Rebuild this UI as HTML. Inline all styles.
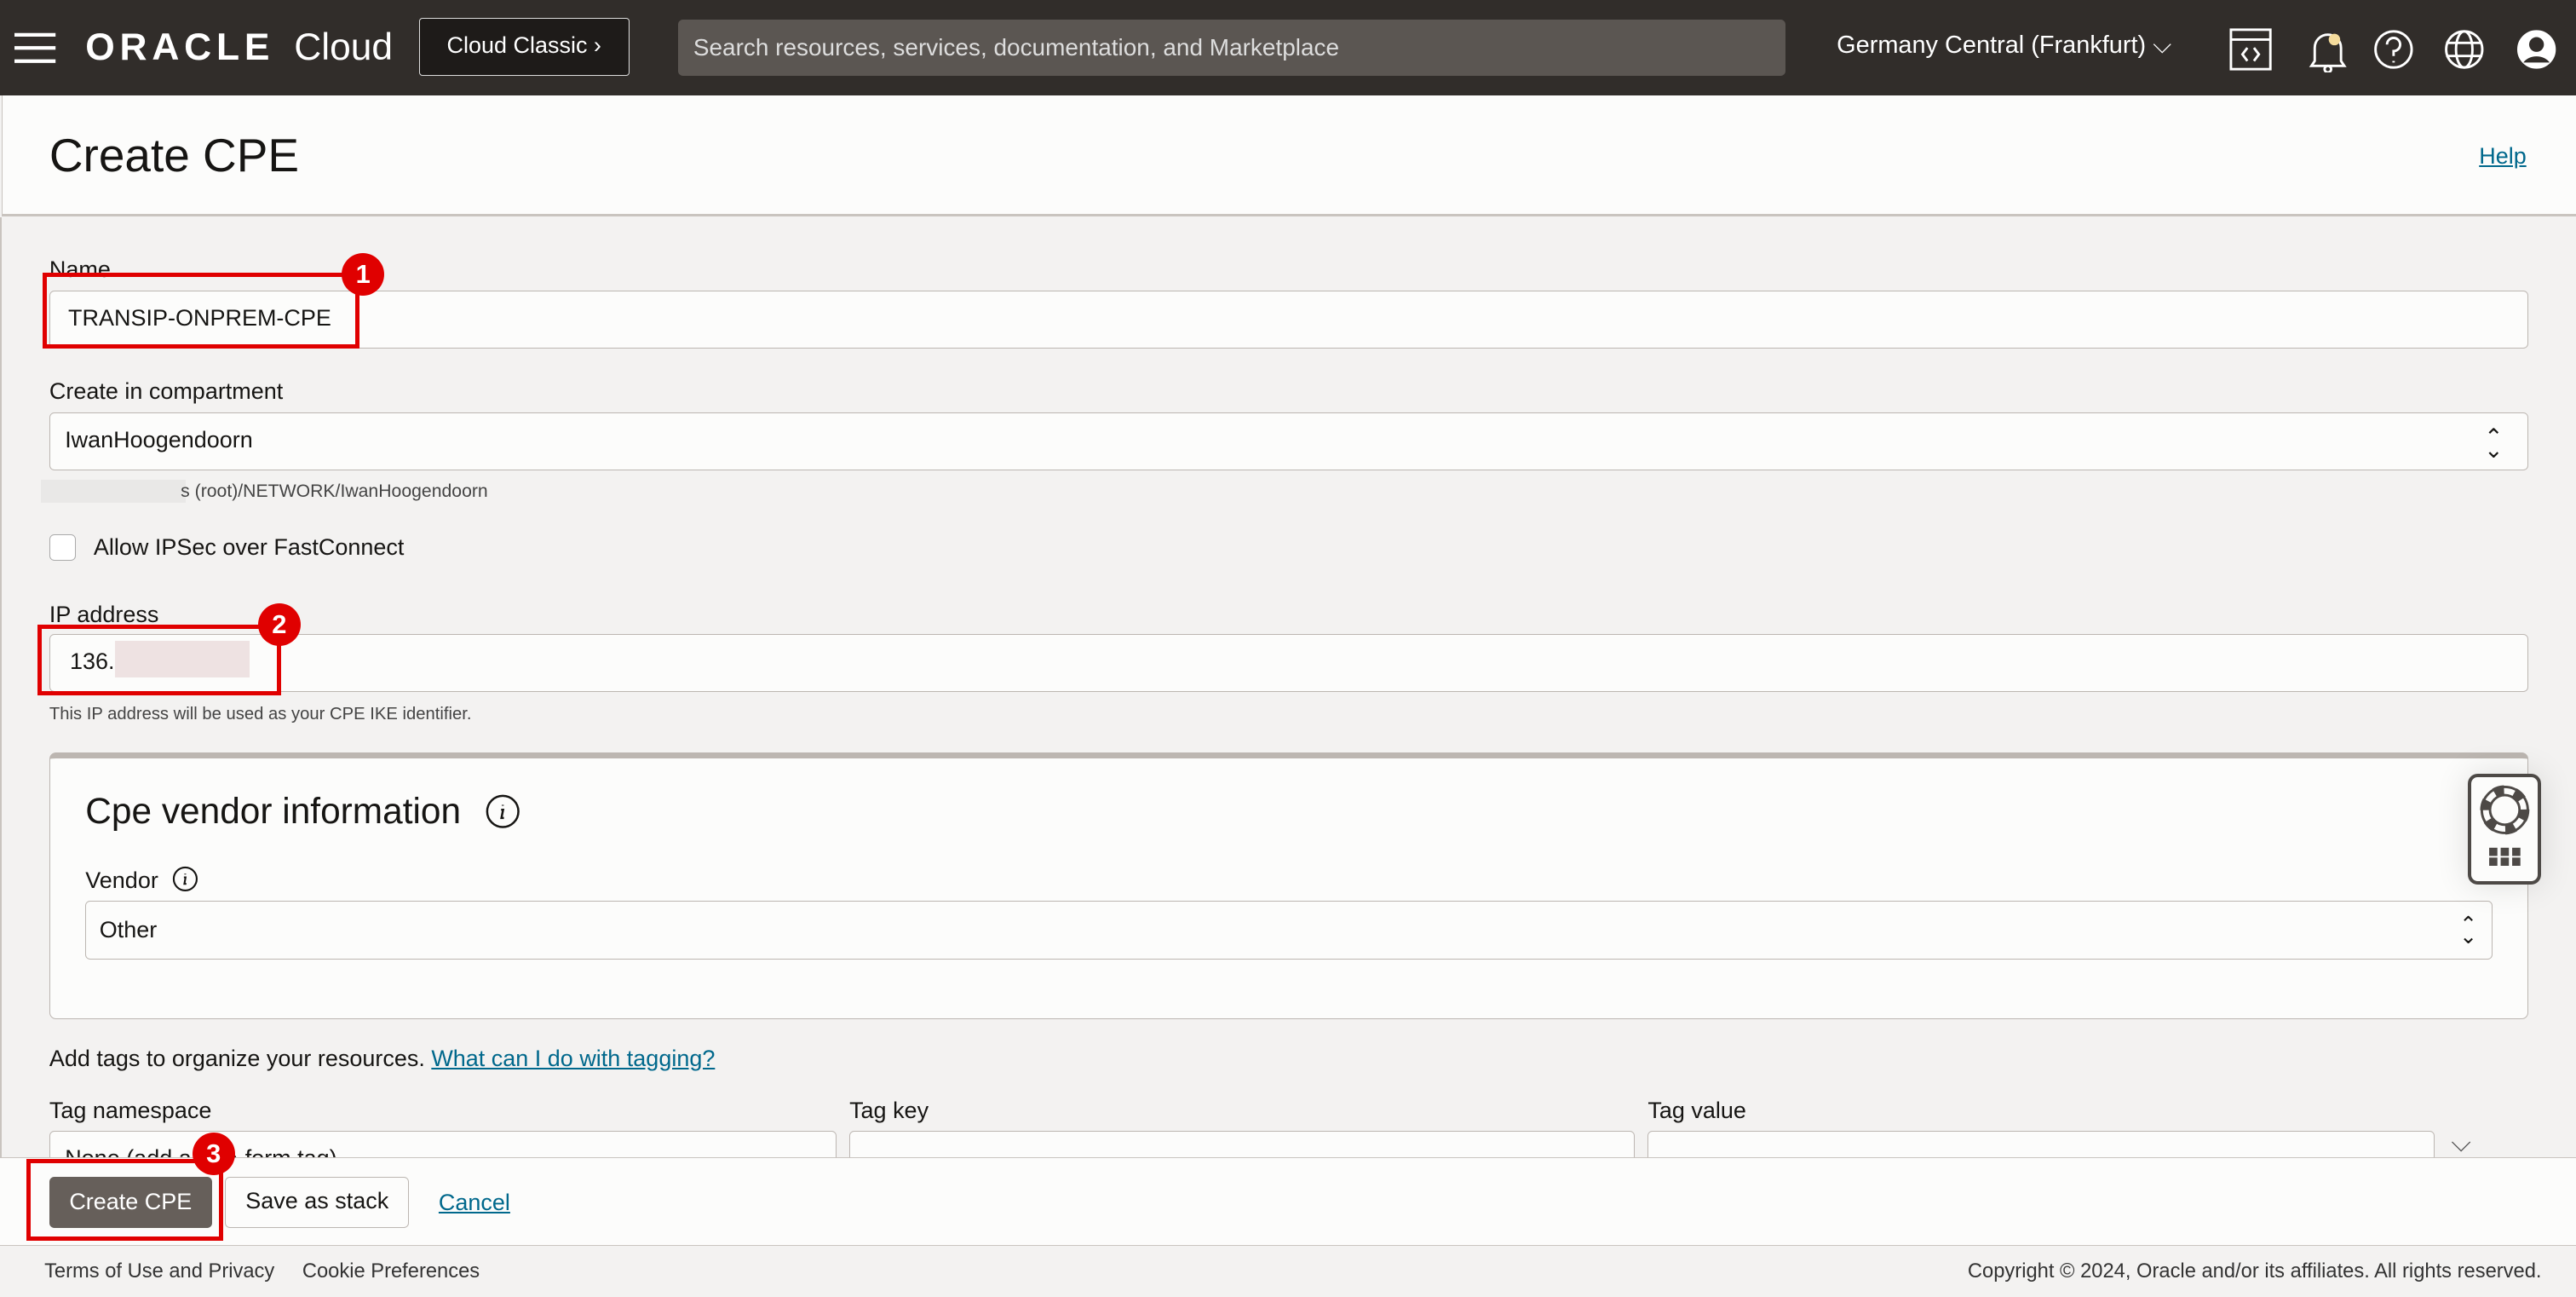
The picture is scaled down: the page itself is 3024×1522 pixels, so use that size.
<!DOCTYPE html>
<html><head><meta charset="utf-8"><style>
html,body{margin:0;padding:0;overflow:hidden}
body{width:3024px;height:1522px;background:#f3f2f1}
#r{zoom:1.92857;width:1568px;height:790px;position:relative;font-family:"Liberation Sans",sans-serif;color:#161513;background:#f3f2f1;overflow:hidden}
.a{position:absolute}
.hdr{left:0;top:0;width:1568px;height:58px;background:#312d2a}
.inp{position:absolute;background:#fcfcfb;border:1px solid #bcb6b1;border-radius:3px;box-sizing:border-box;font-size:14px;line-height:33px;padding-left:9px}
.lbl{position:absolute;font-size:14px}
.red{position:absolute;border:3px solid #e00000;box-sizing:border-box}
.bdg{position:absolute;width:26px;height:26px;border-radius:50%;background:#e00000;color:#fff;font-weight:bold;font-size:16px;text-align:center;line-height:26px}
.lnk{color:#00688c;text-decoration:underline}
.ft{position:absolute;top:767px;font-size:12.3px;color:#333}
</style></head><body><div id="r">
<div class="a hdr"></div>
<svg class="a" style="left:9px;top:19px" width="26" height="20"><g stroke="#fff" stroke-width="2.2"><line x1="0" y1="2" x2="25" y2="2"/><line x1="0" y1="10" x2="25" y2="10"/><line x1="0" y1="18" x2="25" y2="18"/></g></svg>
<div class="a" style="left:52px;top:16px;color:#fff;font-size:23px;font-weight:bold;letter-spacing:3px">ORACLE</div>
<div class="a" style="left:179px;top:16px;color:#fff;font-size:23px">Cloud</div>
<div class="a" style="left:255px;top:11px;width:128px;height:35px;border:1px solid #ddd;border-radius:2px;background:#1e1b19;box-sizing:border-box;color:#fff;font-size:14px;line-height:33px;text-align:center">Cloud Classic ›</div>
<div class="a" style="left:413px;top:12px;width:674px;height:34px;background:#5b5652;border-radius:3px;color:#ddd;font-size:14.5px;line-height:34px;padding-left:9px;box-sizing:border-box">Search resources, services, documentation, and Marketplace</div>
<div class="a" style="left:1118px;top:19px;color:#fff;font-size:15px">Germany Central (Frankfurt) ⌵</div>
<svg class="a" style="left:1357px;top:16px" width="200" height="28" fill="none" stroke="#fff" stroke-width="1.5">
<rect x="1" y="2" width="24" height="24"/><line x1="1" y1="8" x2="25" y2="8"/><path d="M11 13l-3 4 3 4M15 13l3 4-3 4"/>
<path d="M50 24h20l-2-3v-8a8 8 0 0 0-16 0v8z"/><circle cx="60" cy="26" r="2"/><circle cx="64" cy="8" r="3.5" fill="#f5dc9c" stroke="none"/>
<circle cx="100" cy="14" r="11"/><path d="M96 11a4 4 0 1 1 4 4v3M100 21v1"/>
<circle cx="143" cy="14" r="11"/><ellipse cx="143" cy="14" rx="5" ry="11"/><line x1="132" y1="10" x2="154" y2="10"/><line x1="132" y1="18" x2="154" y2="18"/>
<circle cx="187" cy="14" r="11" fill="#fff"/><circle cx="187" cy="11" r="4.5" fill="#312d2a" stroke="none"/><path d="M179 22a9 7 0 0 1 16 0" fill="#312d2a" stroke="none"/>
</svg>
<div class="a" style="left:1px;top:58px;width:1567px;height:72px;background:#fcfcfb;border-bottom:2px solid #c9c4bf;border-left:1px solid #c9c4bf"></div>
<div class="a" style="left:30px;top:78px;font-size:28.5px">Create CPE</div>
<div class="a lnk" style="left:1509px;top:87px;font-size:14px">Help</div>
<div class="a" style="left:0;top:132px;width:1px;height:626px;background:#c9c4bf"></div>

<div class="lbl" style="left:30px;top:156px">Name</div>
<div class="inp" style="left:30px;top:177px;width:1509px;height:35px;padding-left:11px">TRANSIP-ONPREM-CPE</div>
<div class="red" style="left:26px;top:166px;width:193px;height:46px"></div>
<div class="bdg" style="left:208px;top:154px">1</div>

<div class="lbl" style="left:30px;top:230px">Create in compartment</div>
<div class="inp" style="left:30px;top:251px;width:1509px;height:35px">IwanHoogendoorn</div>
<div class="a" style="left:1512px;top:258px;font-size:14px">⌃</div><div class="a" style="left:1512px;top:266px;font-size:14px">⌄</div>
<div class="a" style="left:25px;top:292px;width:88px;height:14px;background:#e9e8e7"></div>
<div class="a" style="left:110px;top:293px;font-size:11px;color:#444">s (root)/NETWORK/IwanHoogendoorn</div>
<div class="a" style="left:30px;top:325px;width:16px;height:16px;border:1px solid #aaa;border-radius:3px;background:#fff;box-sizing:border-box"></div>
<div class="lbl" style="left:57px;top:325px">Allow IPSec over FastConnect</div>

<div class="lbl" style="left:30px;top:366px">IP address</div>
<div class="inp" style="left:30px;top:386px;width:1509px;height:35px;padding-left:12px">136.</div>
<div class="a" style="left:70px;top:390px;width:82px;height:22px;background:#eee2e2"></div>
<div class="red" style="left:23px;top:380px;width:148px;height:43px"></div>
<div class="bdg" style="left:157px;top:367px">2</div>
<div class="a" style="left:30px;top:429px;font-size:10.5px;color:#444">This IP address will be used as your CPE IKE identifier.</div>

<div class="a" style="left:30px;top:458px;width:1509px;height:162px;background:#fcfcfb;border:1px solid #bcb6b1;border-top:4px solid #bcb6b1;border-radius:4px;box-sizing:border-box"></div>
<div class="a" style="left:52px;top:481px;font-size:22px">Cpe vendor information</div>
<svg class="a" style="left:295px;top:483px" width="22" height="22" fill="none" stroke="#161513" stroke-width="1.3"><circle cx="11" cy="11" r="9.5"/><path d="M11 7v.5M10 10h1.2l-1 5h1.5"/></svg>
<div class="lbl" style="left:52px;top:528px">Vendor</div>
<svg class="a" style="left:105px;top:527px" width="16" height="16" fill="none" stroke="#161513" stroke-width="1.1"><circle cx="8" cy="8" r="7"/><path d="M8 4.8v.5M7.2 7h1l-.7 4h1.2"/></svg>
<div class="inp" style="left:52px;top:548px;width:1465px;height:36px;line-height:35px;padding-left:8px">Other</div>
<div class="a" style="left:1497px;top:555px;font-size:13px">⌃</div><div class="a" style="left:1497px;top:562px;font-size:13px">⌄</div>
<div class="a" style="left:1502px;top:471px;width:45px;height:67px;border:2.5px solid #4d4946;border-radius:6px;background:#fcfcfb;box-sizing:border-box;box-shadow:0 0 20px rgba(0,0,0,.12)"></div>
<svg class="a" style="left:1502px;top:471px" width="45" height="67"><circle cx="22.5" cy="22" r="12" fill="none" stroke="#4d4946" stroke-width="6" stroke-dasharray="6 6.5"/><circle cx="22.5" cy="22" r="14" fill="none" stroke="#4d4946" stroke-width="1.5"/><circle cx="22.5" cy="22" r="9" fill="none" stroke="#4d4946" stroke-width="1.5"/>
<g fill="#4d4946"><rect x="13" y="45" width="5" height="5"/><rect x="20" y="45" width="5" height="5"/><rect x="27" y="45" width="5" height="5"/><rect x="13" y="51" width="5" height="5"/><rect x="20" y="51" width="5" height="5"/><rect x="27" y="51" width="5" height="5"/></g></svg>

<div class="lbl" style="left:30px;top:636px">Add tags to organize your resources. <span class="lnk">What can I do with tagging?</span></div>
<div class="lbl" style="left:30px;top:668px">Tag namespace</div>
<div class="lbl" style="left:517px;top:668px">Tag key</div>
<div class="lbl" style="left:1003px;top:668px">Tag value</div>
<div class="inp" style="left:30px;top:688px;width:479px;height:36px">None (add a free-form tag)</div>
<div class="inp" style="left:517px;top:688px;width:478px;height:36px"></div>
<div class="inp" style="left:1003px;top:688px;width:479px;height:36px"></div>
<div class="a" style="left:1492px;top:686px;font-size:16px;color:#555">⌵</div>

<div class="a" style="left:0;top:704px;width:1568px;height:54px;background:#fcfcfb;border-top:1px solid #c9c4bf;border-bottom:1px solid #c9c4bf;box-sizing:border-box"></div>
<div class="a" style="left:30px;top:716px;width:99px;height:31px;background:#665f5a;border-radius:3px;color:#fff;font-size:14px;line-height:31px;text-align:center">Create CPE</div>
<div class="a" style="left:137px;top:716px;width:112px;height:31px;background:#fcfcfb;border:1px solid #bcb6b1;border-radius:3px;box-sizing:border-box;font-size:14px;line-height:29px;text-align:center">Save as stack</div>
<div class="a lnk" style="left:267px;top:724px;font-size:14px">Cancel</div>
<div class="red" style="left:16px;top:705px;width:120px;height:50px"></div>
<div class="bdg" style="left:117px;top:689px">3</div>

<div class="ft" style="left:27px">Terms of Use and Privacy</div>
<div class="ft" style="left:184px">Cookie Preferences</div>
<div class="ft" style="right:21px">Copyright © 2024, Oracle and/or its affiliates. All rights reserved.</div>
</div></body></html>
